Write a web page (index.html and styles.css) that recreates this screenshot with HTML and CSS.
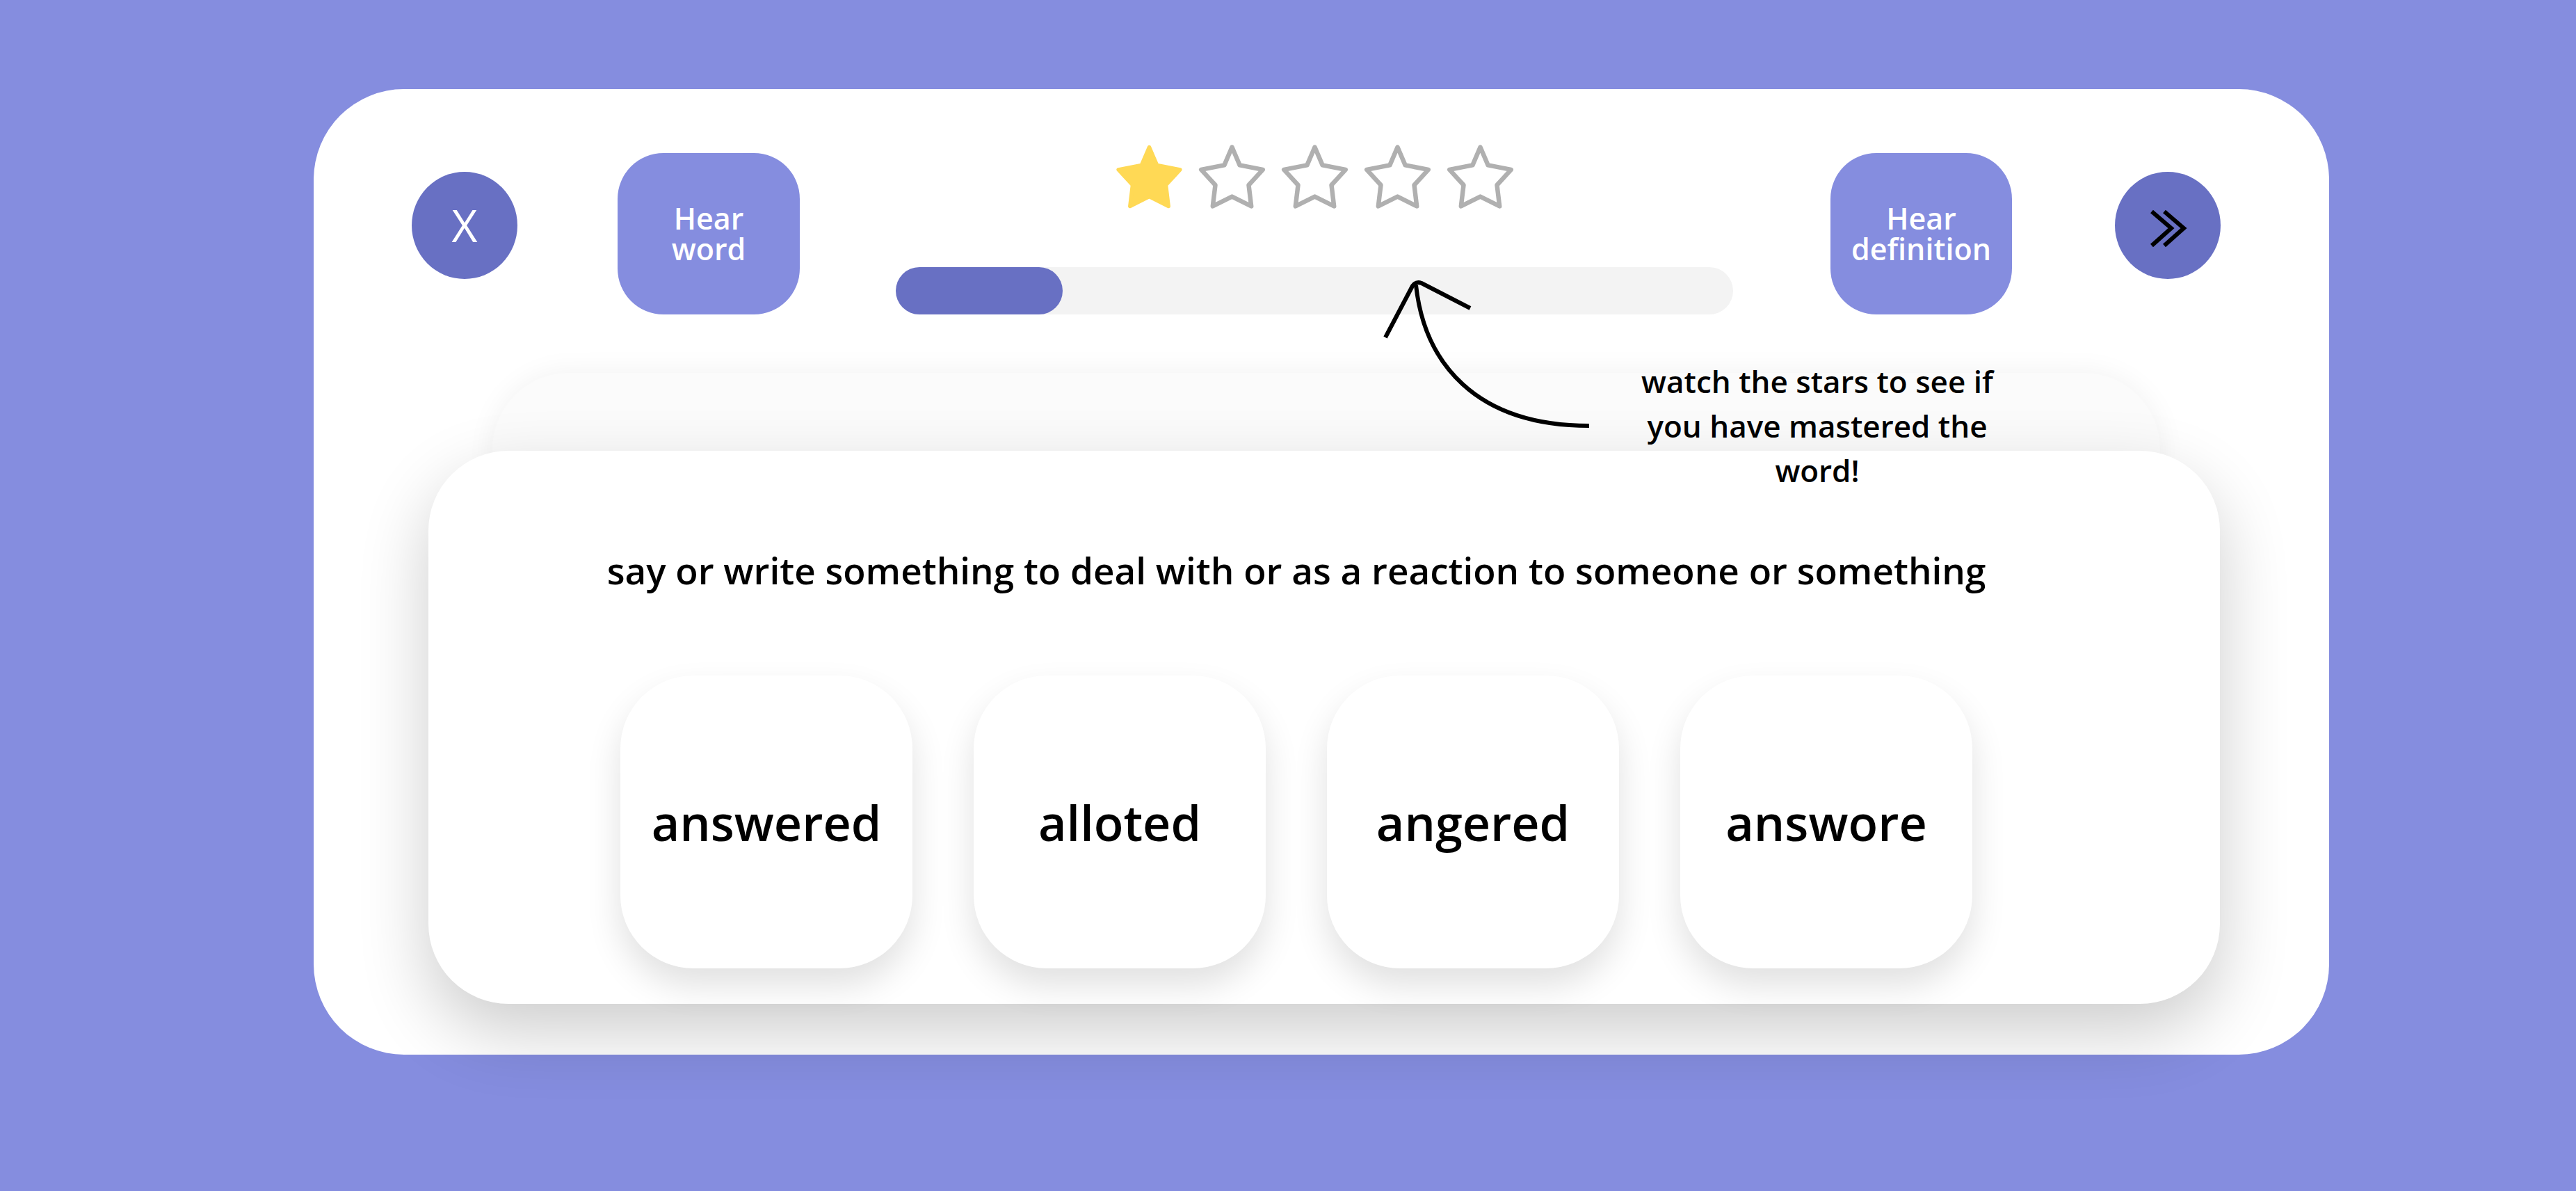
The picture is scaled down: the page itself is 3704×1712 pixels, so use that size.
FILE: index.html
```html
<!DOCTYPE html>
<html lang="en">
<head>
<meta charset="utf-8">
<title>Word practice</title>
<link rel="stylesheet" href="styles.css">
</head>
<body>
<div class="card">
  <div class="toolbar">
    <button class="round-btn close">X</button>
    <button class="hear-btn hear-word"><span class="line">Hear</span><span class="line">word</span></button>
    <div class="progress-col">
      <div class="stars">
        <svg class="star filled" viewBox="-4 -4 108 104" width="101" height="96"><polygon points="50,2 62,30 98,37 76,61 80,94 50,79 20,94 24,61 2,37 38,30"/></svg>
        <svg class="star empty" viewBox="-4 -4 108 104" width="101" height="96"><polygon points="50,2 62,30 98,37 76,61 80,94 50,79 20,94 24,61 2,37 38,30"/></svg>
        <svg class="star empty" viewBox="-4 -4 108 104" width="101" height="96"><polygon points="50,2 62,30 98,37 76,61 80,94 50,79 20,94 24,61 2,37 38,30"/></svg>
        <svg class="star empty" viewBox="-4 -4 108 104" width="101" height="96"><polygon points="50,2 62,30 98,37 76,61 80,94 50,79 20,94 24,61 2,37 38,30"/></svg>
        <svg class="star empty" viewBox="-4 -4 108 104" width="101" height="96"><polygon points="50,2 62,30 98,37 76,61 80,94 50,79 20,94 24,61 2,37 38,30"/></svg>
      </div>
      <div class="track"><div class="fill" style="width:240px"></div></div>
    </div>
    <button class="hear-btn hear-def"><span class="line">Hear</span><span class="line">definition</span></button>
    <button class="round-btn next">
      <svg viewBox="0 0 152 152" width="152" height="152"><polyline points="53,56 81,80 53,105"/><polyline points="71,56 99,80 71,105"/></svg>
    </button>
  </div>

  <div class="stack">
    <div class="back-card"></div>
    <div class="front-card">
      <p class="question">say or write something to deal with or as a reaction to someone or something</p>
      <div class="options">
        <div class="option">answered</div>
        <div class="option">alloted</div>
        <div class="option">angered</div>
        <div class="option">answore</div>
      </div>
    </div>
  </div>

  <svg class="arrow" viewBox="1529 267 320 230" width="320" height="230">
    <path d="M1541 357 L1580 283 Q1585 276 1593 279 L1663 315"/>
    <path d="M1585 282 C1597 392 1669 484 1834 484"/>
  </svg>
  <p class="hint">watch the stars to see if<br>you have mastered the<br>word!</p>
</div>
</body>
</html>
```
FILE: styles.css
```css
html, body {
  margin: 0;
  padding: 0;
}
body {
  background: #858ddf;
  font-family: "Open Sans", "Noto Sans", sans-serif;
  width: 3704px;
  height: 1712px;
  overflow: hidden;
}
.card {
  position: relative;
  margin: 128px 0 0 451px;
  width: 2898px;
  height: 1388px;
  background: #ffffff;
  border-radius: 130px;
}
.toolbar {
  display: flex;
  align-items: flex-start;
  padding: 78px 0 0 141px;
}
button {
  font-family: inherit;
  border: none;
  padding: 0;
  cursor: pointer;
}
.round-btn {
  width: 152px;
  height: 154px;
  border-radius: 50%;
  background: #6870c3;
  margin-top: 41px;
  display: flex;
  align-items: center;
  justify-content: center;
}
.close {
  color: #ffffff;
  font-size: 64px;
  font-weight: 400;
  line-height: 1;
}
.next {
  margin-left: 148px;
}
.next svg {
  display: block;
}
.next polyline {
  fill: none;
  stroke: #000000;
  stroke-width: 6;
  stroke-linejoin: miter;
}
.hear-btn {
  width: 262px;
  height: 232px;
  margin-top: 14px;
  border-radius: 66px;
  background: #858ddf;
  color: #ffffff;
  font-size: 43px;
  font-weight: 600;
  display: flex;
  flex-direction: column;
  align-items: center;
  justify-content: center;
  text-align: center;
}
.hear-btn .line {
  display: block;
  height: 44px;
  line-height: 44px;
}
.hear-word {
  margin-left: 144px;
}
.hear-def {
  margin-left: 140px;
  width: 261px;
}
.progress-col {
  margin-left: 138px;
  width: 1204px;
  display: flex;
  flex-direction: column;
  align-items: center;
}
.stars {
  display: flex;
  gap: 18px;
  height: 96px;
}
.star {
  display: block;
}
.star polygon {
  stroke-linejoin: round;
}
.star.filled polygon {
  fill: #ffd955;
  stroke: #ffd955;
  stroke-width: 6;
}
.star.empty polygon {
  fill: none;
  stroke: #b0b0b0;
  stroke-width: 7;
}
.track {
  margin-top: 82px;
  width: 100%;
  height: 68px;
  border-radius: 34px;
  background: #f3f3f3;
}
.fill {
  height: 100%;
  border-radius: 34px;
  background: #6870c3;
}
.stack {
  margin-top: 84px;
}
.back-card {
  position: relative;
  z-index: 1;
  margin-left: 257px;
  width: 2398px;
  height: 160px;
  border-radius: 110px 110px 0 0;
  background: #fbfbfb;
  box-shadow: 0 0 40px rgba(0, 0, 0, 0.06);
}
.front-card {
  position: relative;
  z-index: 1;
  box-sizing: border-box;
  margin: -48px 0 0 165px;
  width: 2576px;
  height: 795px;
  border-radius: 115px;
  background: #ffffff;
  box-shadow: 0 40px 100px rgba(0, 0, 0, 0.2);
  padding: 142px 356px 51px 276px;
  display: flex;
  flex-direction: column;
  align-items: center;
}
.question {
  margin: 0;
  white-space: nowrap;
  font-size: 53px;
  font-weight: 600;
  line-height: 60px;
  color: #000000;
}
.options {
  margin-top: 121px;
  display: flex;
  gap: 88px;
}
.option {
  width: 420px;
  height: 421px;
  border-radius: 105px;
  background: #ffffff;
  box-shadow: 0 25px 50px rgba(0, 0, 0, 0.12);
  display: flex;
  align-items: center;
  justify-content: center;
  font-size: 70px;
  font-weight: 600;
  color: #000000;
}
.arrow {
  position: absolute;
  z-index: 2;
  left: 1529px;
  top: 267px;
}
.arrow path {
  fill: none;
  stroke: #000000;
  stroke-width: 6;
  stroke-linecap: butt;
  stroke-linejoin: round;
}
.hint {
  position: absolute;
  z-index: 2;
  margin: 0;
  left: 1862px;
  top: 388px;
  width: 600px;
  text-align: center;
  font-size: 44px;
  font-weight: 600;
  line-height: 64px;
  color: #000000;
}
```
